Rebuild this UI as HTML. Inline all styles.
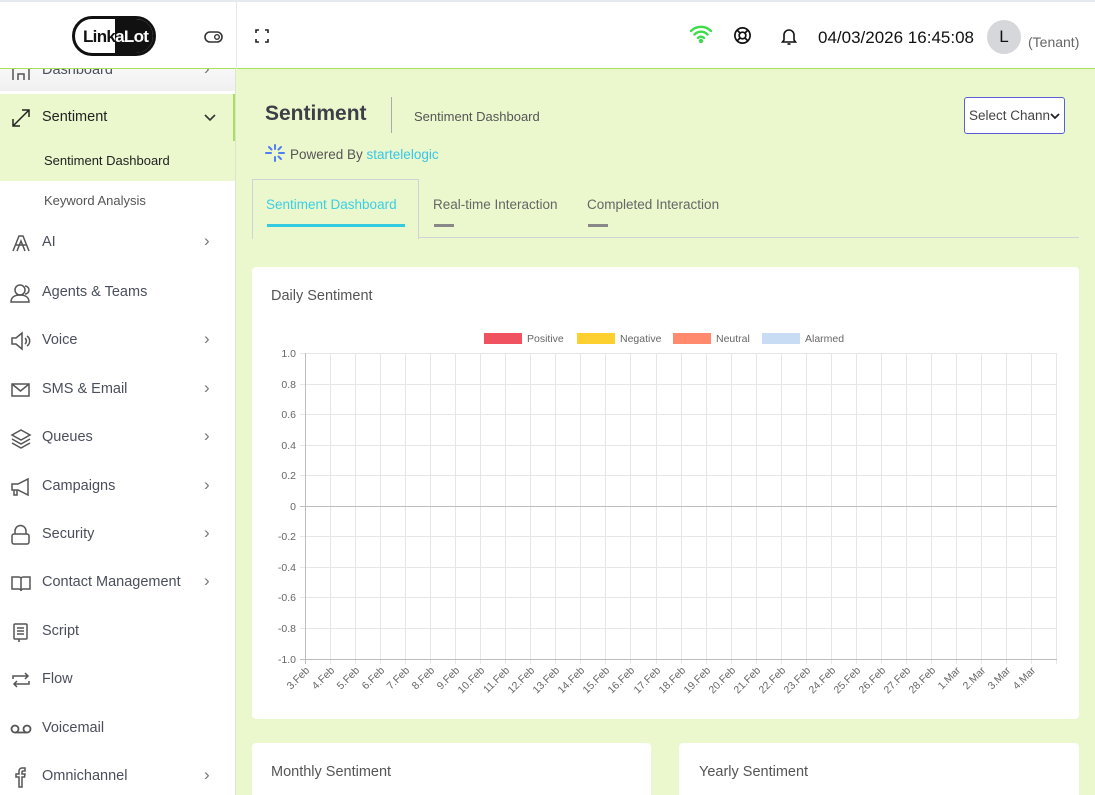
<!DOCTYPE html>
<html><head><meta charset="utf-8"><style>
*{box-sizing:border-box;margin:0;padding:0}
html,body{width:1095px;height:795px;overflow:hidden}
body{font-family:"Liberation Sans",sans-serif;background:#ebf7cd;position:relative;color:#333}
.top{position:absolute;left:0;top:0;width:1095px;height:69px;background:#fff;border-top:2px solid #e6e9ee;border-bottom:1px solid #a8e05a}
.side{position:absolute;left:0;top:69px;width:236px;height:726px;background:#fff;border-right:1px solid #dde6cc;overflow:hidden}
.it{position:absolute;left:0;width:236px;height:48px;font-size:14.5px;color:#4b4f5c}
.it .ic{position:absolute;left:10px;top:13px;width:22px;height:22px}
.it .tx{position:absolute;left:42px;top:15px}
.it .ch{position:absolute;left:204px;top:12px;color:#777;font-size:17px}
.sub{position:absolute;left:0;width:236px;height:40px;font-size:13px;color:#555}
.sub span{position:absolute;left:44px;top:12px}
.card{position:absolute;background:#fff;border-radius:4px}
</style></head><body>
<div class="top">
  <div style="position:absolute;left:72px;top:14px;width:84px;height:40px;border:3px solid #111;border-radius:20px;overflow:hidden;background:#fff">
    <div style="position:absolute;left:40px;top:0;width:44px;height:40px;background:#111"></div>
    <div style="position:absolute;left:8px;top:8px;font-weight:bold;font-size:17px;letter-spacing:-0.7px;color:#111">Link<span style="color:#fff">aLot</span></div>
  </div>
  <svg style="position:absolute;left:204px;top:28px" width="20" height="14" viewBox="0 0 20 14"><rect x="1" y="2" width="17" height="10" rx="5" fill="none" stroke="#333" stroke-width="1.6"/><circle cx="13" cy="7" r="2.3" fill="none" stroke="#333" stroke-width="1.4"/></svg>
  <div style="position:absolute;left:236px;top:0;width:1px;height:67px;background:#e5e7eb"></div>
  <svg style="position:absolute;left:255px;top:27px" width="14" height="14" viewBox="0 0 14 14" fill="none" stroke="#222" stroke-width="1.6"><path d="M1 4V1h3M10 1h3v3M13 10v3h-3M4 13H1v-3"/></svg>
  <svg style="position:absolute;left:689px;top:23px" width="24" height="18" viewBox="0 0 24 18" fill="none" stroke="#3ddc4c" stroke-width="2.4" stroke-linecap="round"><path d="M2 6a14 14 0 0 1 20 0M5.5 9.5a9 9 0 0 1 13 0M9 13a4 4 0 0 1 6 0"/><circle cx="12" cy="16" r="1" fill="#3ddc4c"/></svg>
  <svg style="position:absolute;left:733px;top:24px" width="19" height="19" viewBox="0 0 20 20" fill="none" stroke="#111" stroke-width="1.8"><circle cx="10" cy="10" r="8"/><circle cx="10" cy="10" r="3.5"/><path d="M4.5 4.5l3 3M15.5 4.5l-3 3M4.5 15.5l3-3M15.5 15.5l-3-3"/></svg>
  <svg style="position:absolute;left:780px;top:25px" width="18" height="19" viewBox="0 0 18 19" fill="none" stroke="#111" stroke-width="1.6"><path d="M4 13V8a5 5 0 0 1 10 0v5l1.5 2h-13z"/><path d="M7.5 17h3"/></svg>
  <div style="position:absolute;left:818px;top:26px;font-size:17px;color:#111">04/03/2026 16:45:08</div>
  <div style="position:absolute;left:987px;top:18px;width:34px;height:34px;border-radius:50%;background:#d6d7db;text-align:center;line-height:34px;font-size:17px;color:#111">L</div>
  <div style="position:absolute;left:1028px;top:32px;font-size:14px;color:#666">(Tenant)</div>
</div>
<div class="side">
  <div class="it" style="top:-22px;height:44px;background:linear-gradient(#fff,#f0f0f0)"><svg class="ic" viewBox="0 0 22 22" fill="none" stroke="#555" stroke-width="1.5"><path d="M3 20V8l8-5 8 5v12M8 20v-6h6v6"/></svg><span class="tx">Dashboard</span><span class="ch">›</span></div>
  <div class="it" style="top:25px;background:#ebf7cd;border-right:3px solid #a8e05a;color:#222"><svg class="ic" viewBox="0 0 22 22" fill="none" stroke="#222" stroke-width="1.5"><path d="M3 19L19 3M12 3h7v7M3 12v7h7"/></svg><span class="tx" style="font-weight:500">Sentiment</span><svg style="position:absolute;left:204px;top:20px" width="12" height="8" viewBox="0 0 12 8" fill="none" stroke="#333" stroke-width="1.6"><path d="M1 1l5 5 5-5"/></svg></div>
  <div class="sub" style="top:72px;background:#ebf7cd;color:#222"><span>Sentiment Dashboard</span></div>
  <div class="sub" style="top:112px"><span>Keyword Analysis</span></div>
  <div class="it" style="top:150px"><svg class="ic" viewBox="0 0 22 22" fill="none" stroke="#555" stroke-width="1.5"><path d="M3 19L9 4h4l6 15M6 13h10M7 19l4-10 4 10"/></svg><span class="tx">AI</span><span class="ch">›</span></div>
  <div class="it" style="top:200px"><svg class="ic" viewBox="0 0 22 22" fill="none" stroke="#555" stroke-width="1.5"><circle cx="10" cy="8" r="5"/><path d="M1 20c0-5 4-7 9-7s9 2 9 7zM15 4a4 4 0 0 1 0 8"/></svg><span class="tx">Agents &amp; Teams</span></div>
  <div class="it" style="top:248px"><svg class="ic" viewBox="0 0 22 22" fill="none" stroke="#555" stroke-width="1.5"><path d="M2 8h4l6-5v16l-6-5H2zM15 8a4 4 0 0 1 0 6M17 6a6 6 0 0 1 0 10"/></svg><span class="tx">Voice</span><span class="ch">›</span></div>
  <div class="it" style="top:297px"><svg class="ic" viewBox="0 0 22 22" fill="none" stroke="#555" stroke-width="1.5"><rect x="2" y="5" width="17" height="12"/><path d="M2 5l8.5 7L19 5"/></svg><span class="tx">SMS &amp; Email</span><span class="ch">›</span></div>
  <div class="it" style="top:345px"><svg class="ic" viewBox="0 0 22 22" fill="none" stroke="#555" stroke-width="1.5"><path d="M11 3l9 5-9 5-9-5zM2 12l9 5 9-5M2 16l9 5 9-5"/></svg><span class="tx">Queues</span><span class="ch">›</span></div>
  <div class="it" style="top:394px"><svg class="ic" viewBox="0 0 22 22" fill="none" stroke="#555" stroke-width="1.5"><path d="M2 8h6l10-5v16l-10-5H2zM4 14v5h3v-5"/></svg><span class="tx">Campaigns</span><span class="ch">›</span></div>
  <div class="it" style="top:442px"><svg class="ic" viewBox="0 0 22 22" fill="none" stroke="#555" stroke-width="1.5"><rect x="2" y="10" width="17" height="10" rx="2"/><path d="M5 10V7a5.5 5.5 0 0 1 11 0v3"/></svg><span class="tx">Security</span><span class="ch">›</span></div>
  <div class="it" style="top:490px"><svg class="ic" viewBox="0 0 22 22" fill="none" stroke="#555" stroke-width="1.5"><path d="M2 5h7a2 2 0 0 1 2 2v12a2 2 0 0 0-2-2H2zM20 5h-7a2 2 0 0 0-2 2v12a2 2 0 0 1 2-2h7z"/></svg><span class="tx">Contact Management</span><span class="ch">›</span></div>
  <div class="it" style="top:539px"><svg class="ic" viewBox="0 0 22 22" fill="none" stroke="#555" stroke-width="1.5"><rect x="4" y="3" width="13" height="15" rx="1"/><path d="M7 7h7M7 10h7M7 13h7M9 18v3"/></svg><span class="tx">Script</span></div>
  <div class="it" style="top:587px"><svg class="ic" viewBox="0 0 22 22" fill="none" stroke="#555" stroke-width="1.5"><path d="M3 10V7h15M15 4l3 3-3 3M19 12v3H4M7 18l-3-3 3-3"/></svg><span class="tx">Flow</span></div>
  <div class="it" style="top:636px"><svg class="ic" viewBox="0 0 22 22" fill="none" stroke="#555" stroke-width="1.8"><circle cx="5" cy="11" r="3.5"/><circle cx="17" cy="11" r="3.5"/><path d="M5 14.5h12"/></svg><span class="tx">Voicemail</span></div>
  <div class="it" style="top:684px"><svg class="ic" viewBox="0 0 22 22" fill="none" stroke="#555" stroke-width="1.5"><path d="M9 21V11H6V8h3V5a3 3 0 0 1 3-3h3v3h-2a1 1 0 0 0-1 1v2h3l-.5 3H12v10z"/></svg><span class="tx">Omnichannel</span><span class="ch">›</span></div>
</div>

<div style="position:absolute;left:265px;top:102px;font-size:21px;font-weight:bold;color:#3c3f47">Sentiment</div>
<div style="position:absolute;left:391px;top:97px;width:1px;height:36px;background:#aaa"></div>
<div style="position:absolute;left:414px;top:109px;font-size:13px;color:#555">Sentiment Dashboard</div>
<svg style="position:absolute;left:265px;top:144px" width="20" height="18" viewBox="0 0 20 18" stroke="#4f7ff0" stroke-width="2" stroke-linecap="round"><path d="M10 1v4M10 13v4M1 9h5M14 9h5M4 3l2.5 2.5M16 3l-2.5 2.5M16 15l-2.5-2.5"/></svg>
<div style="position:absolute;left:290px;top:147px;font-size:13.5px;color:#555">Powered By <span style="color:#38c7e6">startelelogic</span></div>
<div style="position:absolute;left:964px;top:97px;width:101px;height:37px;border:1px solid #5b5fd6;border-radius:3px;background:#fff;font-size:13.5px;color:#444;padding:10px 0 0 4px;white-space:nowrap;overflow:hidden">Select Chann<svg style="position:absolute;right:4px;top:15px" width="10" height="7" viewBox="0 0 10 7" fill="none" stroke="#222" stroke-width="1.8"><path d="M1 1l4 4 4-4"/></svg></div>

<div style="position:absolute;left:252px;top:237px;width:827px;height:1px;background:#cfd2d6"></div>
<div style="position:absolute;left:252px;top:179px;width:167px;height:60px;border:1px solid #cfd2d6;border-bottom:none;background:#ebf7cd"></div>
<div style="position:absolute;left:266px;top:197px;font-size:13.5px;color:#3ad0e4">Sentiment Dashboard</div>
<div style="position:absolute;left:267px;top:224px;width:138px;height:3px;background:#33cbe0"></div>
<div style="position:absolute;left:433px;top:197px;font-size:13.5px;color:#666">Real-time Interaction</div>
<div style="position:absolute;left:434px;top:224px;width:20px;height:3px;background:#888"></div>
<div style="position:absolute;left:587px;top:197px;font-size:13.5px;color:#666">Completed Interaction</div>
<div style="position:absolute;left:588px;top:224px;width:20px;height:3px;background:#888"></div>

<div class="card" style="left:252px;top:267px;width:827px;height:452px">
  <div style="position:absolute;left:19px;top:21px;font-size:14.5px;color:#555">Daily Sentiment</div>
</div>
<svg style="position:absolute;left:252px;top:267px" width="827" height="452" viewBox="252 267 827 452" font-family="Liberation Sans, sans-serif" font-size="10.5" fill="#666">
  <rect x="484" y="333" width="38" height="11" fill="#f0535f"/><text x="527" y="342">Positive</text>
  <rect x="577" y="333" width="38" height="11" fill="#fdd030"/><text x="620" y="342">Negative</text>
  <rect x="673" y="333" width="38" height="11" fill="#ff8a6e"/><text x="716" y="342">Neutral</text>
  <rect x="762" y="333" width="38" height="11" fill="#c8dcf4"/><text x="805" y="342">Alarmed</text>
  <g stroke="#e6e6e6" stroke-width="1">
    <path d="M300 353.5H1057M300 384.5H1057M300 414.5H1057M300 445.5H1057M300 475.5H1057M300 536.5H1057M300 567.5H1057M300 597.5H1057M300 628.5H1057"/>
    <path d="M330.5 353V664M355.5 353V664M380.5 353V664M405.5 353V664M430.5 353V664M455.5 353V664M480.5 353V664M505.5 353V664M530.5 353V664M555.5 353V664M580.5 353V664M605.5 353V664M630.5 353V664M656.5 353V664M681.5 353V664M706.5 353V664M731.5 353V664M756.5 353V664M781.5 353V664M806.5 353V664M831.5 353V664M856.5 353V664M881.5 353V664M906.5 353V664M931.5 353V664M956.5 353V664M981.5 353V664M1006.5 353V664M1031.5 353V664M1056.5 353V664"/>
  </g>
  <path d="M300 506.5H1057M300 659.5H1057M305.5 353V664" stroke="#bdbdbd"/>
  <g text-anchor="end">
    <text x="296" y="357">1.0</text><text x="296" y="388">0.8</text><text x="296" y="418">0.6</text><text x="296" y="449">0.4</text><text x="296" y="479">0.2</text><text x="296" y="510">0</text><text x="296" y="540">-0.2</text><text x="296" y="571">-0.4</text><text x="296" y="601">-0.6</text><text x="296" y="632">-0.8</text><text x="296" y="663">-1.0</text>
  </g>
  <g text-anchor="end">
    <text transform="translate(310,671) rotate(-45)">3.Feb</text>
    <text transform="translate(335,671) rotate(-45)">4.Feb</text>
    <text transform="translate(360,671) rotate(-45)">5.Feb</text>
    <text transform="translate(385,671) rotate(-45)">6.Feb</text>
    <text transform="translate(410,671) rotate(-45)">7.Feb</text>
    <text transform="translate(435,671) rotate(-45)">8.Feb</text>
    <text transform="translate(460,671) rotate(-45)">9.Feb</text>
    <text transform="translate(485,671) rotate(-45)">10.Feb</text>
    <text transform="translate(510,671) rotate(-45)">11.Feb</text>
    <text transform="translate(535,671) rotate(-45)">12.Feb</text>
    <text transform="translate(560,671) rotate(-45)">13.Feb</text>
    <text transform="translate(585,671) rotate(-45)">14.Feb</text>
    <text transform="translate(610,671) rotate(-45)">15.Feb</text>
    <text transform="translate(635,671) rotate(-45)">16.Feb</text>
    <text transform="translate(661,671) rotate(-45)">17.Feb</text>
    <text transform="translate(686,671) rotate(-45)">18.Feb</text>
    <text transform="translate(711,671) rotate(-45)">19.Feb</text>
    <text transform="translate(736,671) rotate(-45)">20.Feb</text>
    <text transform="translate(761,671) rotate(-45)">21.Feb</text>
    <text transform="translate(786,671) rotate(-45)">22.Feb</text>
    <text transform="translate(811,671) rotate(-45)">23.Feb</text>
    <text transform="translate(836,671) rotate(-45)">24.Feb</text>
    <text transform="translate(861,671) rotate(-45)">25.Feb</text>
    <text transform="translate(886,671) rotate(-45)">26.Feb</text>
    <text transform="translate(911,671) rotate(-45)">27.Feb</text>
    <text transform="translate(936,671) rotate(-45)">28.Feb</text>
    <text transform="translate(961,671) rotate(-45)">1.Mar</text>
    <text transform="translate(986,671) rotate(-45)">2.Mar</text>
    <text transform="translate(1011,671) rotate(-45)">3.Mar</text>
    <text transform="translate(1036,671) rotate(-45)">4.Mar</text>
  </g>
</svg>

<div class="card" style="left:252px;top:743px;width:399px;height:60px"><div style="position:absolute;left:19px;top:21px;font-size:14.5px;color:#555">Monthly Sentiment</div></div>
<div class="card" style="left:679px;top:743px;width:400px;height:60px"><div style="position:absolute;left:20px;top:21px;font-size:14.5px;color:#555">Yearly Sentiment</div></div>
</body></html>
